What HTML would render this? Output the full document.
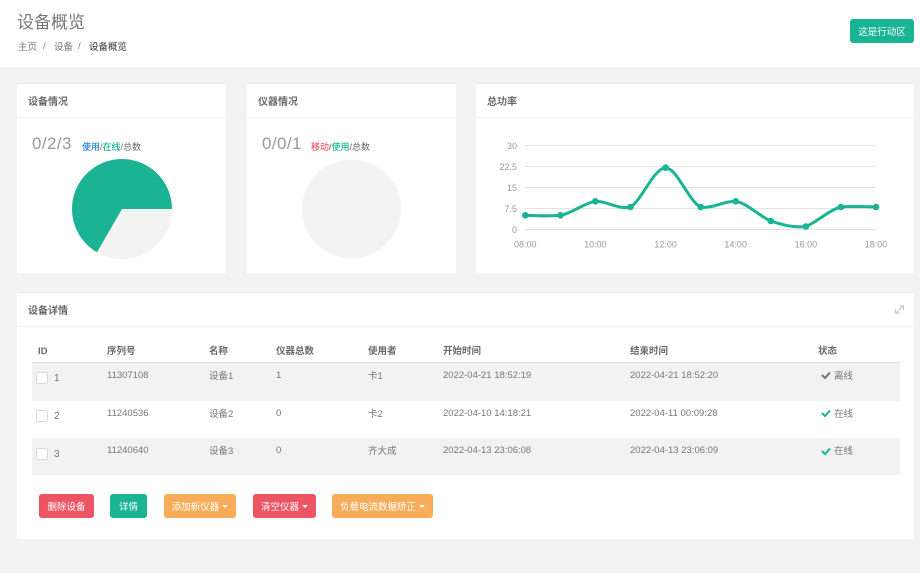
<!DOCTYPE html>
<html lang="zh-CN"><head><meta charset="utf-8"><title>设备概览</title>
<style>
*{box-sizing:border-box}
html,body{margin:0;padding:0}
html{background:#f3f3f4}
body{width:920px;height:573px;position:relative;overflow:hidden;background:#f3f3f4;font-family:"Liberation Sans","Noto Sans CJK SC",sans-serif;color:#676a6c;font-size:9.5px;filter:blur(.3px)}
.a{position:absolute;white-space:nowrap;line-height:14px}
.box{position:absolute;background:#fff;border-top:1px solid #e7eaec}
.hd{position:absolute;left:0;right:0;top:0;height:34px;border-bottom:1px solid #eef0f1}
.ttl{font-size:10px;font-weight:700;color:#676a6c}
.row{position:absolute;left:32px;width:868px;background:#f2f2f2}
.cb{position:absolute;left:36px;width:12px;height:12px;background:#fff;border:1px solid #d8d8d8;border-radius:2px}
.th{font-weight:700;color:#676a6c}
.td{color:#777}
.btn{position:absolute;top:494px;height:24px;border-radius:3px;color:#fff;text-align:center;line-height:27px;font-size:9.5px;white-space:nowrap}
.r{background:#ed5565}.g{background:#1ab394}.o{background:#f8ac59}
.car{display:inline-block;width:0;height:0;border-left:3px solid transparent;border-right:3px solid transparent;border-top:3px solid #fff;margin-left:3px;vertical-align:2px}
svg.top{position:absolute;left:0;top:0;z-index:2}
</style></head><body>
<div style="position:absolute;left:0;top:0;width:920px;height:67px;background:#fff"></div>
<div class="a" style="left:17px;top:11px;font-size:17px;line-height:24px;color:#777">设备概览</div>
<div class="a" style="left:18px;top:41px;color:#777">主页</div>
<div class="a" style="left:43px;top:40px;color:#777">/</div>
<div class="a" style="left:54px;top:41px;color:#777">设备</div>
<div class="a" style="left:78px;top:40px;color:#777">/</div>
<div class="a" style="left:89px;top:41px;color:#555;font-weight:500">设备概览</div>
<div class="btn g" style="left:850px;top:19px;width:64px;height:24px">这是行动区</div>

<div class="box" style="left:17px;top:83px;width:209px;height:190px"><div class="hd"></div></div>
<div class="box" style="left:247px;top:83px;width:209px;height:190px"><div class="hd"></div></div>
<div class="box" style="left:476px;top:83px;width:438px;height:190px"><div class="hd"></div></div>
<div class="box" style="left:17px;top:292px;width:897px;height:247px"><div class="hd"></div></div>

<div class="a ttl" style="left:28px;top:96px">设备情况</div>
<div class="a ttl" style="left:258px;top:96px">仪器情况</div>
<div class="a ttl" style="left:487px;top:96px">总功率</div>
<div class="a ttl" style="left:28px;top:305px">设备详情</div>

<div class="a" style="left:32px;top:133px;font-size:17px;line-height:22px;color:#999;letter-spacing:.4px">0/2/3</div>
<div class="a" style="left:82px;top:140px;font-size:9px;color:#666"><span style="color:#1c84c6;font-weight:500">使用</span>/<span style="color:#1ab394;font-weight:500">在线</span>/总数</div>
<div class="a" style="left:262px;top:133px;font-size:17px;line-height:22px;color:#999;letter-spacing:.4px">0/0/1</div>
<div class="a" style="left:311px;top:140px;font-size:9px;color:#666"><span style="color:#ed5565;font-weight:500">移动</span>/<span style="color:#1ab394;font-weight:500">使用</span>/总数</div>

<div class="a th" style="left:38px;top:345px">ID</div>
<div class="a th" style="left:107px;top:345px">序列号</div>
<div class="a th" style="left:209px;top:345px">名称</div>
<div class="a th" style="left:276px;top:345px">仪器总数</div>
<div class="a th" style="left:368px;top:345px">使用者</div>
<div class="a th" style="left:443px;top:345px">开始时间</div>
<div class="a th" style="left:630px;top:345px">结束时间</div>
<div class="a th" style="left:818px;top:345px">状态</div>

<div class="row" style="top:362px;height:39px;border-top:1.5px solid #ddd"></div>
<div class="row" style="top:438px;height:37px"></div>

<svg class="top" width="920" height="573" viewBox="0 0 920 573">
<circle cx="122" cy="209" r="50" fill="#f3f3f3"/>
<path d="M122 209L172 209A50 50 0 1 0 97 252.3Z" fill="#1ab394"/>
<circle cx="351.500" cy="209" r="49.500" fill="#f3f3f3"/>
<g stroke="#e2e2e2" stroke-width="1">
<path d="M525 145.500H876M525 166.500H876M525 187.500H876M525 208.500H876M525 229.500H876"/>
</g>
<path d="M525.300 215.300C537 215.500 549 216.500 560.400 215.300C572 213.500 584 203 595.400 201.300C607 201 619 210 630.500 207C642 200 654 168 665.600 167.700C677 168 689 202 700.700 207C712 209 724 201 735.700 201.300C747 203 759 216 770.800 221C782 225 794 228 805.900 226.500C817 222 829 210 840.900 207C852 206 864 206.500 876 207" fill="none" stroke="#1ab394" stroke-width="3" stroke-linecap="round"/>
<g fill="#1ab394">
<circle cx="525.300" cy="215.300" r="3.300"/><circle cx="560.400" cy="215.300" r="3.300"/><circle cx="595.400" cy="201.300" r="3.300"/><circle cx="630.500" cy="207" r="3.300"/><circle cx="665.600" cy="167.700" r="3.300"/><circle cx="700.700" cy="207" r="3.300"/><circle cx="735.700" cy="201.300" r="3.300"/><circle cx="770.800" cy="221" r="3.300"/><circle cx="805.900" cy="226.500" r="3.300"/><circle cx="840.900" cy="207" r="3.300"/><circle cx="876" cy="207" r="3.300"/>
</g>
<g font-family="Liberation Sans, sans-serif" font-size="9" fill="#999" text-anchor="end">
<text x="517" y="149">30</text><text x="517" y="170">22.5</text><text x="517" y="191">15</text><text x="517" y="212">7.5</text><text x="517" y="233">0</text>
</g>
<g font-family="Liberation Sans, sans-serif" font-size="9" fill="#999" text-anchor="middle">
<text x="525.300" y="247.500">08:00</text><text x="595.400" y="247.500">10:00</text><text x="665.600" y="247.500">12:00</text><text x="735.700" y="247.500">14:00</text><text x="805.900" y="247.500">16:00</text><text x="876" y="247.500">18:00</text>
</g>
<path d="M896 313L903 306M899.500 306H903.500V310M899.500 313H895.500V309" fill="none" stroke="#c8c8c8" stroke-width="1.200"/>
<path d="M822 375L825 378L830 372.500" fill="none" stroke="#777" stroke-width="2"/>
<path d="M822 413L825 416L830 410.500" fill="none" stroke="#1ab394" stroke-width="2"/>
<path d="M822 451L825 454L830 448.500" fill="none" stroke="#1ab394" stroke-width="2"/>
</svg>

<div class="cb" style="top:372px"></div><div class="a td" style="left:54px;top:372px;font-size:10px">1</div>
<div class="cb" style="top:410px"></div><div class="a td" style="left:54px;top:410px;font-size:10px">2</div>
<div class="cb" style="top:448px"></div><div class="a td" style="left:54px;top:448px;font-size:10px">3</div>

<div class="a td" style="left:107px;top:369px">11307108</div>
<div class="a td" style="left:209px;top:370px">设备1</div>
<div class="a td" style="left:276px;top:369px">1</div>
<div class="a td" style="left:368px;top:370px">卡1</div>
<div class="a td" style="left:443px;top:369px">2022-04-21 18:52:19</div>
<div class="a td" style="left:630px;top:369px">2022-04-21 18:52:20</div>
<div class="a td" style="left:834px;top:370px">离线</div>

<div class="a td" style="left:107px;top:407px">11240536</div>
<div class="a td" style="left:209px;top:408px">设备2</div>
<div class="a td" style="left:276px;top:407px">0</div>
<div class="a td" style="left:368px;top:408px">卡2</div>
<div class="a td" style="left:443px;top:407px">2022-04-10 14:18:21</div>
<div class="a td" style="left:630px;top:407px">2022-04-11 00:09:28</div>
<div class="a td" style="left:834px;top:408px">在线</div>

<div class="a td" style="left:107px;top:444px">11240640</div>
<div class="a td" style="left:209px;top:445px">设备3</div>
<div class="a td" style="left:276px;top:444px">0</div>
<div class="a td" style="left:368px;top:445px">齐大成</div>
<div class="a td" style="left:443px;top:444px">2022-04-13 23:06:08</div>
<div class="a td" style="left:630px;top:444px">2022-04-13 23:06:09</div>
<div class="a td" style="left:834px;top:445px">在线</div>

<div class="btn r" style="left:39px;width:55px">删除设备</div>
<div class="btn g" style="left:110px;width:37px">详情</div>
<div class="btn o" style="left:164px;width:72px">添加新仪器<span class="car"></span></div>
<div class="btn r" style="left:253px;width:63px">清空仪器<span class="car"></span></div>
<div class="btn o" style="left:332px;width:101px">负载电流数据矫正<span class="car"></span></div>
</body></html>
